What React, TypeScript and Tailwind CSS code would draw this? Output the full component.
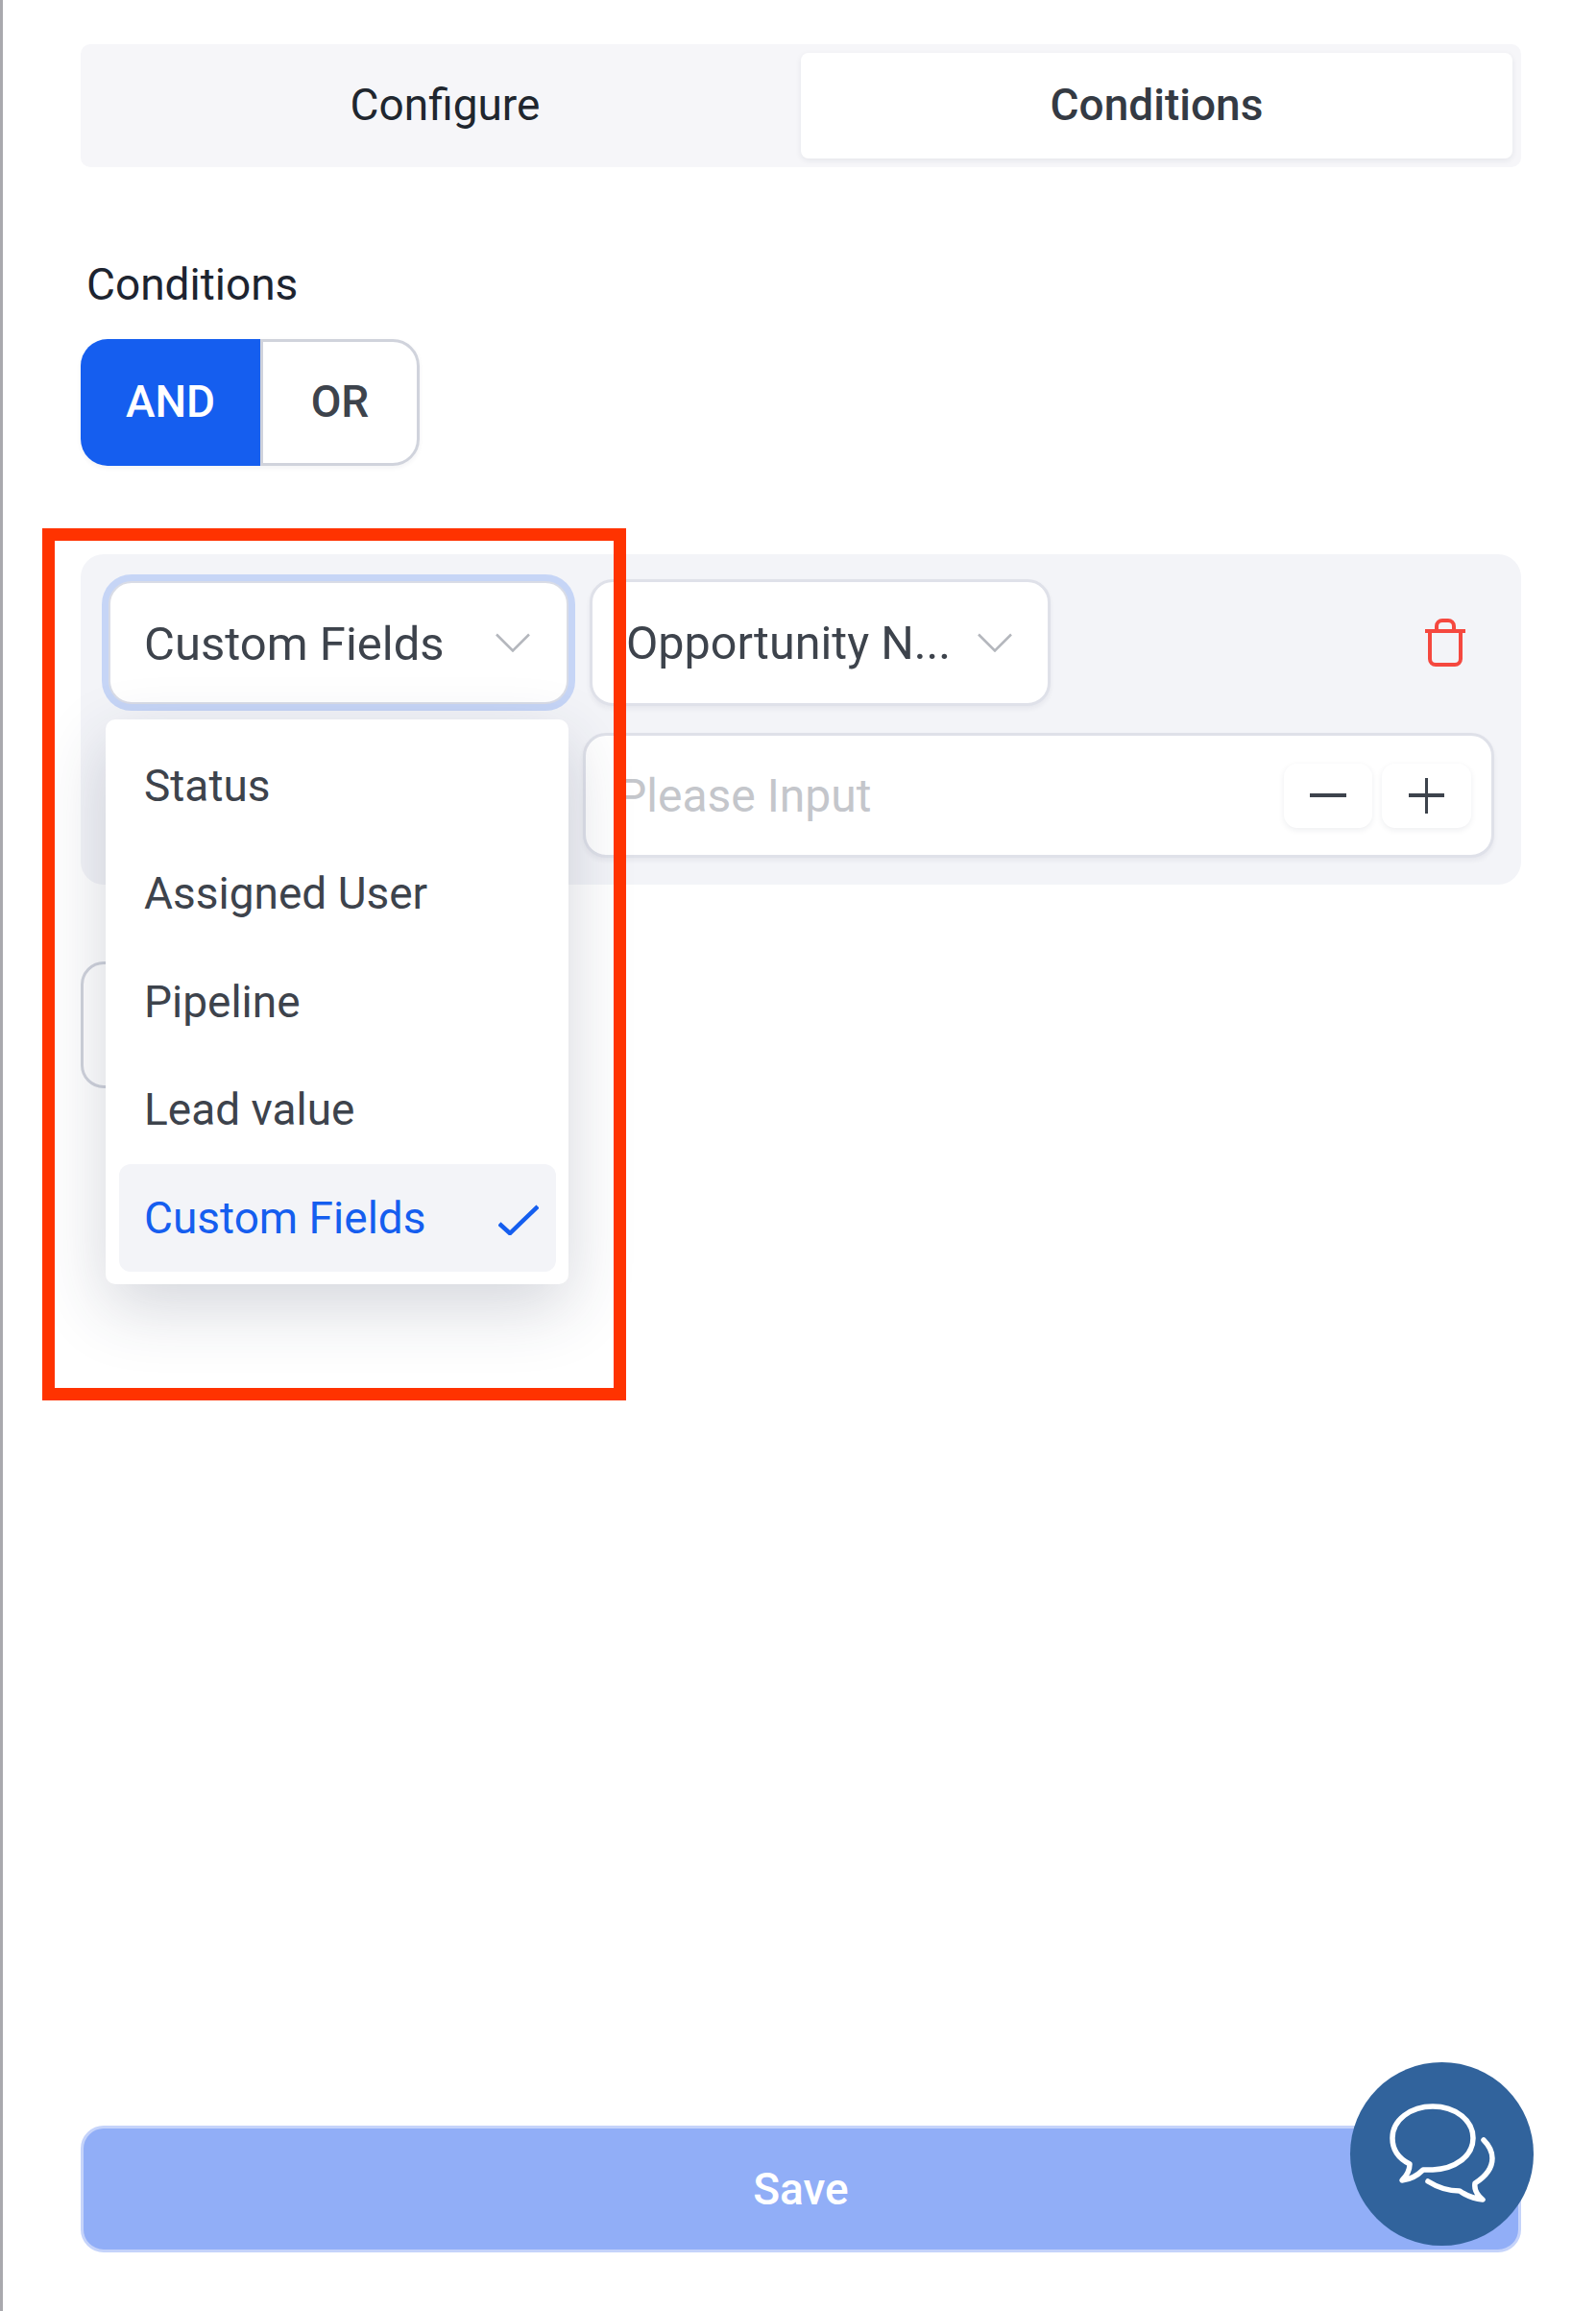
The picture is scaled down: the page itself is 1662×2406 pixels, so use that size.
const options = ['Status', 'Assigned User', 'Pipeline', 'Lead value'];

function Chevron() {
  return (
    <svg width="36" height="20" viewBox="0 0 36 20" fill="none" stroke="#b4b7bd" strokeWidth="2.5" aria-hidden="true">
      <path d="M1 1.5 18 18.5 35 1.5" />
    </svg>
  );
}

function TrashIcon() {
  return (
    <svg width="44" height="50" viewBox="0 0 44 50" fill="none" stroke="#f5483f" strokeWidth="4" aria-hidden="true">
      <path d="M1 13h42" />
      <path d="M13 13V8a6 6 0 0 1 6-6h6a6 6 0 0 1 6 6v5" />
      <path d="M6 13v29a6 6 0 0 0 6 6h20a6 6 0 0 0 6-6V13" />
    </svg>
  );
}

function ChatIcon() {
  return (
    <svg width="191" height="191" viewBox="0 0 191 191" fill="none" stroke="white" strokeWidth="5.5" strokeLinecap="round" strokeLinejoin="round" aria-hidden="true">
      <path d="M62 106C50 100 44 90 44 79 44 60 63 46 86 46s42 14 42 33-19 32-42 33c-4 0-7 0-10 0-6 6-13 10-22 11 5-5 8-10 8-17Z" />
      <path d="M139 81c6 6 9 12 9 19 0 10-7 19-18 26-1 6 2 12 8 17-9-1-17-4-24-9-12 0-22-3-33-10" />
    </svg>
  );
}

export default function App() {
  return (
    <div className="relative flex h-[2406px] w-[1662px] flex-col overflow-hidden border-l-[3px] border-[#a9a9ae] bg-white pl-[81px] pr-[78px] font-['Roboto',sans-serif]">
      {/* blue marks on the window edge */}
      <div className="absolute -left-[3px] top-[590px] h-[70px] w-[3px] bg-[#2f62a8]" />
      <div className="absolute -left-[3px] top-[1068px] h-[72px] w-[3px] bg-[#2f62a8]" />

      {/* tabs */}
      <div className="mt-[46px] flex h-[128px] rounded-[10px] bg-[#f6f6f9] p-[9px] text-[46px] text-[#20262e]">
        <div className="flex flex-1 items-center justify-center pb-[2px]">Configure</div>
        <div className="flex w-[741px] items-center justify-center rounded-[8px] bg-white pb-[2px] font-medium text-[#343a43] shadow-[0_2px_6px_rgba(30,40,70,0.08)]">
          Conditions
        </div>
      </div>

      <div className="mt-[94px] pl-[6px] text-[46px] leading-[56px] text-[#1d2430]">Conditions</div>

      {/* and / or */}
      <div className="mt-[29px] flex h-[132px] w-[353px] rounded-[28px] text-[46px] font-medium shadow-[0_2px_5px_rgba(30,40,70,0.06)]">
        <div className="flex w-[187px] items-center justify-center rounded-l-[28px] bg-[#155eef] pb-[2px] text-white">AND</div>
        <div className="flex flex-1 items-center justify-center rounded-r-[28px] border-[3px] border-[#d0d3dc] bg-white pb-[2px] text-[#3d434c]">OR</div>
      </div>

      {/* condition group */}
      <div className="mt-[92px] flex h-[344px] flex-col rounded-[24px] bg-[#f3f4f8] pl-[29px] pr-[28px] pt-[26px]">
        <div className="flex items-center">
          <div className="flex h-[128px] w-[479px] items-center justify-between rounded-[24px] border-2 border-[#d9dce6] bg-white pl-[35px] pr-[38px] text-[49px] text-[#3d434c] shadow-[0_0_0_7px_#c6d5f6]">
            <span className="pt-[3px]">Custom Fields</span>
            <Chevron />
          </div>
          <div className="ml-[22px] flex h-[132px] w-[480px] items-center rounded-[24px] border-[3px] border-[#dfe1e9] bg-white pl-[35px] text-[48.5px] text-[#3d434c] shadow-[0_3px_5px_rgba(30,40,70,0.06)]">
            <span className="pt-[3px]">Opportunity N...</span>
            <span className="ml-[28px]"><Chevron /></span>
          </div>
          <div className="ml-auto mr-[29px]"><TrashIcon /></div>
        </div>
        <div className="ml-[494px] mt-[28px] flex h-[130px] items-center justify-between rounded-[24px] border-[3px] border-[#dfe1e9] bg-white pl-[33px] pr-[21px] text-[48px] text-[#c4c6cb] shadow-[0_3px_5px_rgba(30,40,70,0.06)]">
          <span className="pt-[2px]">Please Input</span>
          <div className="flex gap-[10px]">
            <div className="flex h-[67px] w-[92px] items-center justify-center rounded-[14px] bg-white shadow-[0_2px_6px_rgba(30,40,70,0.08)]">
              <div className="h-[4px] w-[38px] bg-[#3d434c]" />
            </div>
            <div className="relative flex h-[67px] w-[93px] items-center justify-center rounded-[14px] bg-white shadow-[0_2px_6px_rgba(30,40,70,0.08)]">
              <div className="h-[4px] w-[37px] bg-[#3d434c]" />
              <div className="absolute h-[37px] w-[3px] bg-[#3d434c]" />
            </div>
          </div>
        </div>
      </div>

      {/* add button, mostly hidden by the open menu */}
      <div className="mt-[80px] h-[132px] w-[300px] rounded-[24px] border-[3px] border-[#d0d3dc] bg-white" />

      {/* save */}
      <div className="mb-[61px] mt-auto flex h-[132px] items-center justify-center rounded-[24px] border-[3px] border-[#c5d3fa] bg-[#91aef7] text-[46px] font-medium text-white">
        Save
      </div>

      {/* open menu */}
      <div className="absolute left-[107px] top-[749px] w-[482px] rounded-[10px] bg-white pb-[13px] pl-[14px] pr-[13px] pt-[13px] text-[46px] text-[#3d434c] shadow-[0_24px_70px_rgba(40,50,80,0.2)]">
        {options.map((o) => (
          <div key={o} className="flex h-[112.5px] items-center pl-[26px]">{o}</div>
        ))}
        <div className="flex h-[112px] items-center justify-between rounded-[12px] bg-[#f3f4f8] pl-[26px] pr-[18px] text-[#155eef]">
          Custom Fields
          <svg width="42" height="32" viewBox="0 0 42 32" fill="none" stroke="#155eef" strokeWidth="4.5" aria-hidden="true" className="mt-[3px]">
            <path d="M1 20l11 10L41 2" />
          </svg>
        </div>
      </div>

      {/* red annotation frame */}
      <div className="absolute left-[41px] top-[550px] h-[908px] w-[608px] border-[13px] border-[#ff3300]" />

      {/* chat bubble */}
      <div className="absolute left-[1403px] top-[2147px] h-[191px] w-[191px] rounded-full bg-[#31639c]">
        <ChatIcon />
      </div>
    </div>
  );
}
